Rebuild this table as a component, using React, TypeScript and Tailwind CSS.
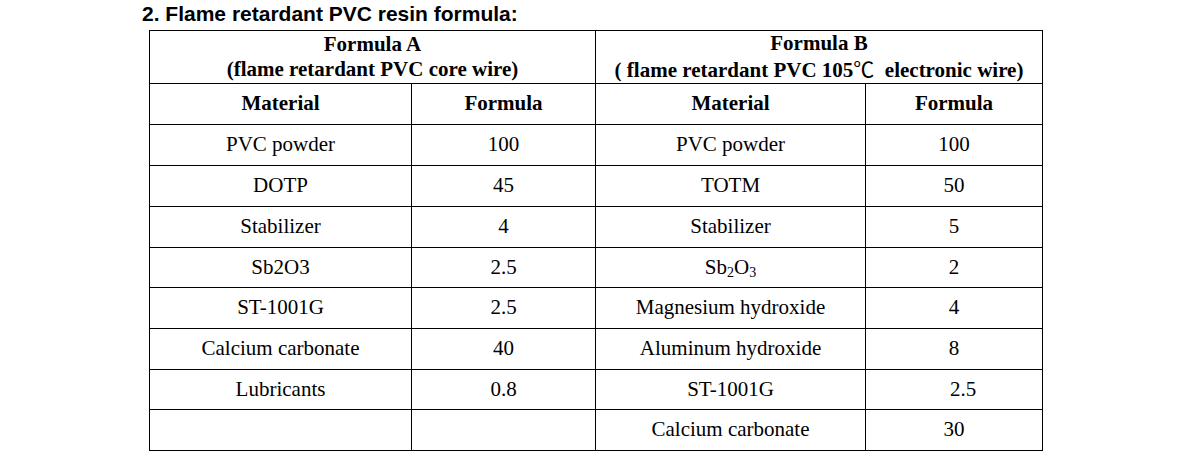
import React from "react";

const rowsA: [string, string][] = [
  ["PVC powder", "100"],
  ["DOTP", "45"],
  ["Stabilizer", "4"],
  ["Sb2O3", "2.5"],
  ["ST-1001G", "2.5"],
  ["Calcium carbonate", "40"],
  ["Lubricants", "0.8"],
  ["", ""],
];

const rowsB: [React.ReactNode, string, boolean?][] = [
  ["PVC powder", "100"],
  ["TOTM", "50"],
  ["Stabilizer", "5"],
  [
    <span>
      Sb<span className="text-[14px] align-[-3px] leading-none">2</span>O
      <span className="text-[14px] align-[-3px] leading-none">3</span>
    </span>,
    "2",
  ],
  ["Magnesium hydroxide", "4"],
  ["Aluminum hydroxide", "8"],
  ["ST-1001G", "2.5", true],
  ["Calcium carbonate", "30"],
];

const heights = [41, 41, 41, 40, 41, 41, 40, 41];

export default function App() {
  const cell = "border border-black text-center align-middle p-0";
  return (
    <div className="w-[1190px] h-[451px] bg-white overflow-hidden">
      <div className="pl-[142px] pt-[2px]">
        <div
          className="text-[21px] leading-[24px] font-bold text-black"
          style={{ fontFamily: '"Liberation Sans", Arial, sans-serif' }}
        >
          2. Flame retardant PVC resin formula:
        </div>
        <table
          className="mt-[4px] ml-[7px] w-[893px] table-fixed border-collapse text-[21px] text-black"
          style={{ fontFamily: '"Liberation Serif", "Times New Roman", serif' }}
        >
          <colgroup>
            <col className="w-[262px]" />
            <col className="w-[184px]" />
            <col className="w-[270px]" />
            <col className="w-[177px]" />
          </colgroup>
          <tbody>
            <tr>
              <td colSpan={2} className={`${cell} h-[51px] font-bold leading-[25px]`}>
                Formula A
                <br />
                (flame retardant PVC core wire)
              </td>
              <td colSpan={2} className={`${cell} h-[51px] font-bold leading-[25px]`}>
                Formula B
                <br />( flame retardant PVC 105
                <span
                  className="font-normal"
                  style={{ fontFamily: '"Noto Sans CJK SC", sans-serif' }}
                >
                  ℃
                </span>
                {"\u00a0\u00a0"}electronic wire)
              </td>
            </tr>
            <tr>
              <td className={`${cell} h-[41px] font-bold`}>Material</td>
              <td className={`${cell} h-[41px] font-bold`}>Formula</td>
              <td className={`${cell} h-[41px] font-bold`}>Material</td>
              <td className={`${cell} h-[41px] font-bold`}>Formula</td>
            </tr>
            {rowsA.map((a, i) => {
              const b = rowsB[i];
              return (
                <tr key={i} style={{ height: heights[i] }}>
                  <td className={cell}>{a[0]}</td>
                  <td className={cell}>{a[1]}</td>
                  <td className={cell}>{b[0]}</td>
                  <td className={`${cell} ${b[2] ? "pl-[18px]" : ""}`}>{b[1]}</td>
                </tr>
              );
            })}
          </tbody>
        </table>
      </div>
    </div>
  );
}
